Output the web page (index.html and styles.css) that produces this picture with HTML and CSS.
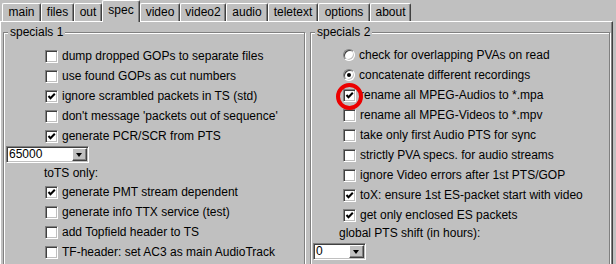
FILE: index.html
```html
<!DOCTYPE html>
<html lang="en">
<head>
    <meta charset="UTF-8">
    <title>spec</title>
    <link rel="stylesheet" href="styles.css">
</head>
<body>
    <div class="window">
        <div class="tabs">
            <div class="tab tab-main">main</div>
            <div class="tab tab-files">files</div>
            <div class="tab tab-out">out</div>
            <div class="tab tab-spec active">spec</div>
            <div class="tab tab-video">video</div>
            <div class="tab tab-video2">video2</div>
            <div class="tab tab-audio">audio</div>
            <div class="tab tab-teletext">teletext</div>
            <div class="tab tab-options">options</div>
            <div class="tab tab-about">about</div>
        </div>
        <div class="panel">
            <fieldset class="group">
                <legend>specials 1</legend>
                <div class="group-body body-left">
                    <div class="row"><span class="check"></span>dump dropped GOPs to separate files</div>
                    <div class="row"><span class="check"></span>use found GOPs as cut numbers</div>
                    <div class="row"><span class="check on"><svg viewBox="0 0 9 9"><polyline points="1.5,4 3.5,6.3 7.8,1.8"/></svg></span>ignore scrambled packets in TS (std)</div>
                    <div class="row"><span class="check"></span>don't message 'packets out of sequence'</div>
                    <div class="row"><span class="check on"><svg viewBox="0 0 9 9"><polyline points="1.5,4 3.5,6.3 7.8,1.8"/></svg></span>generate PCR/SCR from PTS</div>
                    <div class="combo combo-wide"><span class="combo-value">65000</span><span class="combo-btn"></span></div>
                    <div class="note note-left">toTS only:</div>
                    <div class="row"><span class="check on"><svg viewBox="0 0 9 9"><polyline points="1.5,4 3.5,6.3 7.8,1.8"/></svg></span>generate PMT stream dependent</div>
                    <div class="row"><span class="check"></span>generate info TTX service (test)</div>
                    <div class="row"><span class="check"></span>add Topfield header to TS</div>
                    <div class="row"><span class="check"></span>TF-header: set AC3 as main AudioTrack</div>
                </div>
            </fieldset>
            <fieldset class="group">
                <legend>specials 2</legend>
                <div class="group-body body-right">
                    <div class="row"><span class="radio"></span>check for overlapping PVAs on read</div>
                    <div class="row"><span class="radio on"></span>concatenate different recordings</div>
                    <div class="row"><span class="check on"><svg viewBox="0 0 9 9"><polyline points="1.5,4 3.5,6.3 7.8,1.8"/></svg></span>rename all MPEG-Audios to *.mpa</div>
                    <div class="row"><span class="check"></span>rename all MPEG-Videos to *.mpv</div>
                    <div class="row"><span class="check"></span>take only first Audio PTS for sync</div>
                    <div class="row"><span class="check"></span>strictly PVA specs. for audio streams</div>
                    <div class="row"><span class="check"></span>ignore Video errors after 1st PTS/GOP</div>
                    <div class="row"><span class="check on"><svg viewBox="0 0 9 9"><polyline points="1.5,4 3.5,6.3 7.8,1.8"/></svg></span>toX: ensure 1st ES-packet start with video</div>
                    <div class="row"><span class="check on"><svg viewBox="0 0 9 9"><polyline points="1.5,4 3.5,6.3 7.8,1.8"/></svg></span>get only enclosed ES packets</div>
                    <div class="note note-right">global PTS shift (in hours):</div>
                    <div class="combo combo-small"><span class="combo-value">0</span><span class="combo-btn"></span></div>
                </div>
            </fieldset>
        </div>
        <span class="mark"></span>
    </div>
</body>
</html>
```

FILE: styles.css
```css
body {
    margin: 0;
    background: #c0c0c0;
    font-family: "Liberation Sans", Arial, sans-serif;
    font-size: 12px;
    color: #000;
}
.window {
    position: relative;
    width: 616px;
    height: 264px;
    overflow: hidden;
}
.tabs {
    display: flex;
    align-items: flex-end;
    height: 21px;
    padding-left: 2px;
}
.tab {
    box-sizing: border-box;
    height: 18px;
    line-height: 17px;
    text-align: center;
    border-top: 1px solid #fff;
    border-left: 1px solid #fff;
    border-right: 1px solid #404040;
    box-shadow: inset -1px 0 0 #808080;
    border-radius: 2px 2px 0 0;
}
.tab.active {
    height: 22px;
    line-height: 18px;
    margin-bottom: -1px;
    background: #c0c0c0;
    position: relative;
    z-index: 1;
}
.tab-main { width: 39px; }
.tab-files { width: 33px; }
.tab-out { width: 28px; }
.tab-spec { width: 38px; }
.tab-video { width: 40px; }
.tab-video2 { width: 46px; }
.tab-audio { width: 42px; }
.tab-teletext { width: 50px; }
.tab-options { width: 52px; }
.tab-about { width: 41px; }
.panel {
    display: grid;
    grid-template-columns: 302px 300px;
    column-gap: 5px;
    align-items: start;
    width: 608px;
    height: 242px;
    padding: 3px 1px 0 2px;
    border-top: 1px solid #fff;
    border-left: 1px solid #fff;
    border-right: 1px solid #404040;
    box-shadow: inset -1px 0 0 #808080;
}
.group {
    margin: 0;
    padding: 0;
    min-width: 0;
    height: 260px;
    border: 1px solid #808080;
    box-shadow: inset 1px 1px 0 #fff, 1px 1px 0 #fff;
}
.group legend {
    margin-left: 4px;
    padding: 0 2px;
    line-height: 14px;
    background: #c0c0c0;
    position: relative;
}
.body-left {
    padding: 7px 0 0 41px;
}
.body-right {
    padding: 6px 0 0 32px;
}
.row {
    display: flex;
    align-items: center;
    gap: 4px;
    height: 20px;
    white-space: nowrap;
}
.check,
.radio {
    box-sizing: border-box;
    flex: none;
    width: 13px;
    height: 13px;
    background: #fff;
    border: 1px solid;
    border-color: #808080 #fff #fff #808080;
    box-shadow: inset 1px 1px 0 #404040, inset -1px -1px 0 #c0c0c0;
    position: relative;
}
.check svg {
    position: absolute;
    left: 1px;
    top: 1px;
    width: 9px;
    height: 9px;
    fill: none;
    stroke: #000;
    stroke-width: 2;
}
.radio {
    width: 12px;
    height: 12px;
    border-radius: 50%;
}
.radio.on::after {
    content: "";
    position: absolute;
    left: 3px;
    top: 3px;
    width: 4px;
    height: 4px;
    border-radius: 50%;
    background: #000;
}
.note {
    white-space: nowrap;
}
.note-left {
    height: 18px;
    line-height: 18px;
    margin-left: -1px;
}
.note-right {
    height: 16px;
    line-height: 16px;
    margin-left: -4px;
}
.combo {
    box-sizing: border-box;
    display: flex;
    align-items: center;
    justify-content: space-between;
    height: 17px;
    background: #fff;
    border: 1px solid;
    border-color: #808080 #fff #fff #808080;
    box-shadow: inset 1px 1px 0 #404040, inset -1px -1px 0 #c0c0c0;
    padding: 1px 1px 1px 2px;
}
.combo-wide {
    width: 83px;
    margin: 0 0 1px -39px;
}
.combo-small {
    width: 53px;
    margin: 2px 0 0 -30px;
}
.combo-value {
    line-height: 13px;
}
.combo-btn {
    box-sizing: border-box;
    position: relative;
    width: 15px;
    height: 13px;
    background: #c0c0c0;
    border: 1px solid;
    border-color: #fff #404040 #404040 #fff;
    box-shadow: inset -1px -1px 0 #808080;
}
.combo-btn::after {
    content: "";
    position: absolute;
    left: 3px;
    top: 4px;
    border-left: 3px solid transparent;
    border-right: 3px solid transparent;
    border-top: 4px solid #000;
}
.mark {
    position: absolute;
    left: 336px;
    top: 83px;
    width: 27px;
    height: 27px;
    box-sizing: border-box;
    border: 4px solid #ec0000;
    border-radius: 50%;
}
```
